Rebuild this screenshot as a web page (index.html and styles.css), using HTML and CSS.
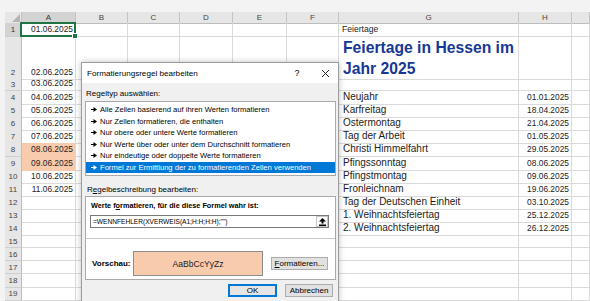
FILE: index.html
```html
<!DOCTYPE html>
<html lang="de">
<head>
<meta charset="utf-8">
<title>Formatierungsregel bearbeiten</title>
<link rel="stylesheet" href="styles.css">
</head>
<body>
<div class="top"></div>
<div class="sheet">
  <div class="r hd">
    <div class="corner"><svg width="8" height="8" viewBox="0 0 8 8"><polygon points="8,0 8,8 0,8" fill="#b5b5b5"/></svg></div>
    <div class="on">A</div><div>B</div><div>C</div><div>D</div><div>E</div><div>F</div><div>G</div><div>H</div><div></div>
  </div>
  <div class="r r1"><div class="rh on">1</div><div class="d sel">01.06.2025</div><div></div><div></div><div></div><div></div><div></div><div class="lbl">Feiertage</div><div></div><div></div></div>
  <div class="r r2"><div class="rh">2</div><div class="d">02.06.2025</div><div></div><div></div><div></div><div></div><div></div><div class="ttl">Feiertage in Hessen im<br>Jahr 2025</div><div></div><div></div></div>
  <div class="r"><div class="rh">3</div><div class="d">03.06.2025</div><div></div><div></div><div></div><div></div><div></div><div></div><div></div><div></div></div>
  <div class="r"><div class="rh">4</div><div class="d">04.06.2025</div><div></div><div></div><div></div><div></div><div></div><div class="n">Neujahr</div><div class="d">01.01.2025</div><div></div></div>
  <div class="r"><div class="rh">5</div><div class="d">05.06.2025</div><div></div><div></div><div></div><div></div><div></div><div class="n">Karfreitag</div><div class="d">18.04.2025</div><div></div></div>
  <div class="r"><div class="rh">6</div><div class="d">06.06.2025</div><div></div><div></div><div></div><div></div><div></div><div class="n">Ostermontag</div><div class="d">21.04.2025</div><div></div></div>
  <div class="r"><div class="rh">7</div><div class="d">07.06.2025</div><div></div><div></div><div></div><div></div><div></div><div class="n">Tag der Arbeit</div><div class="d">01.05.2025</div><div></div></div>
  <div class="r"><div class="rh">8</div><div class="d pk">08.06.2025</div><div></div><div></div><div></div><div></div><div></div><div class="n">Christi Himmelfahrt</div><div class="d">29.05.2025</div><div></div></div>
  <div class="r"><div class="rh">9</div><div class="d pk">09.06.2025</div><div></div><div></div><div></div><div></div><div></div><div class="n">Pfingssonntag</div><div class="d">08.06.2025</div><div></div></div>
  <div class="r"><div class="rh">10</div><div class="d">10.06.2025</div><div></div><div></div><div></div><div></div><div></div><div class="n">Pfingstmontag</div><div class="d">09.06.2025</div><div></div></div>
  <div class="r"><div class="rh">11</div><div class="d">11.06.2025</div><div></div><div></div><div></div><div></div><div></div><div class="n">Fronleichnam</div><div class="d">19.06.2025</div><div></div></div>
  <div class="r"><div class="rh">12</div><div></div><div></div><div></div><div></div><div></div><div></div><div class="n">Tag der Deutschen Einheit</div><div class="d">03.10.2025</div><div></div></div>
  <div class="r"><div class="rh">13</div><div></div><div></div><div></div><div></div><div></div><div></div><div class="n">1. Weihnachtsfeiertag</div><div class="d">25.12.2025</div><div></div></div>
  <div class="r"><div class="rh">14</div><div></div><div></div><div></div><div></div><div></div><div></div><div class="n">2. Weihnachtsfeiertag</div><div class="d">26.12.2025</div><div></div></div>
  <div class="r"><div class="rh">15</div><div></div><div></div><div></div><div></div><div></div><div></div><div></div><div></div><div></div></div>
  <div class="r"><div class="rh">16</div><div></div><div></div><div></div><div></div><div></div><div></div><div></div><div></div><div></div></div>
  <div class="r"><div class="rh">17</div><div></div><div></div><div></div><div></div><div></div><div></div><div></div><div></div><div></div></div>
  <div class="r"><div class="rh">18</div><div></div><div></div><div></div><div></div><div></div><div></div><div></div><div></div><div></div></div>
  <div class="r"><div class="rh">19</div><div></div><div></div><div></div><div></div><div></div><div></div><div></div><div></div><div></div></div>
</div>

<div class="dlg">
  <div class="tb">
    <span class="tt">Formatierungsregel bearbeiten</span>
    <span class="q">?</span>
    <svg class="x" width="9" height="9" viewBox="0 0 9 9"><path d="M1 1L8 8M8 1L1 8" stroke="#222" stroke-width="1"/></svg>
  </div>
  <div class="bd">
    <div class="lab">Regeltyp auswählen:</div>
    <ul class="list">
      <li><svg class="ar" width="6" height="5" viewBox="0 0 6 5"><path d="M0 2.5H3" stroke="currentColor" stroke-width="1"/><polygon points="2.5,0 6,2.5 2.5,5" fill="currentColor"/></svg>Alle Zellen basierend auf ihren Werten formatieren</li>
      <li><svg class="ar" width="6" height="5" viewBox="0 0 6 5"><path d="M0 2.5H3" stroke="currentColor" stroke-width="1"/><polygon points="2.5,0 6,2.5 2.5,5" fill="currentColor"/></svg>Nur Zellen formatieren, die enthalten</li>
      <li><svg class="ar" width="6" height="5" viewBox="0 0 6 5"><path d="M0 2.5H3" stroke="currentColor" stroke-width="1"/><polygon points="2.5,0 6,2.5 2.5,5" fill="currentColor"/></svg>Nur obere oder untere Werte formatieren</li>
      <li><svg class="ar" width="6" height="5" viewBox="0 0 6 5"><path d="M0 2.5H3" stroke="currentColor" stroke-width="1"/><polygon points="2.5,0 6,2.5 2.5,5" fill="currentColor"/></svg>Nur Werte über oder unter dem Durchschnitt formatieren</li>
      <li><svg class="ar" width="6" height="5" viewBox="0 0 6 5"><path d="M0 2.5H3" stroke="currentColor" stroke-width="1"/><polygon points="2.5,0 6,2.5 2.5,5" fill="currentColor"/></svg>Nur eindeutige oder doppelte Werte formatieren</li>
      <li class="act"><svg class="ar" width="6" height="5" viewBox="0 0 6 5"><path d="M0 2.5H3" stroke="currentColor" stroke-width="1"/><polygon points="2.5,0 6,2.5 2.5,5" fill="currentColor"/></svg>Formel zur Ermittlung der zu formatierenden Zellen verwenden</li>
    </ul>
    <div class="lab lab2">R<u>e</u>gelbeschreibung bearbeiten:</div>
    <div class="panel">
      <div class="up">
        <div class="bl pl">Werte f<u>o</u>rmatieren, für die diese Formel wahr ist:</div>
        <div class="fx">
          <span class="fxt">=WENNFEHLER(XVERWEIS(A1;H:H;H:H);"")</span>
          <span class="rb"><svg width="7" height="8" viewBox="0 0 7 8"><polygon points="3.5,0 7,3.5 0,3.5" fill="#000"/><rect x="2.5" y="3" width="2" height="2.5" fill="#000"/><rect x="0" y="6.5" width="7" height="1.5" fill="#000"/></svg></span>
        </div>
      </div>
      <div class="lo">
        <div class="bl">Vorschau:</div>
        <div class="pv">AaBbCcYyZz</div>
        <div class="btn fmt"><u>F</u>ormatieren...</div>
      </div>
    </div>
    <div class="btns">
      <div class="btn ok">OK</div>
      <div class="btn cancel">Abbrechen</div>
    </div>
  </div>
</div>
</body>
</html>
```

FILE: styles.css
```css
* { box-sizing: border-box; margin: 0; padding: 0; }
html, body { width: 590px; height: 301px; overflow: hidden; }
body {
  background: #fff;
  font-family: "Liberation Sans", Arial, sans-serif;
  position: relative;
  color: #222;
}
.top { height: 12px; background: #f3f3f3; }
.sheet { padding-left: 5px; background: #f3f3f3; }

.r {
  display: grid;
  grid-template-columns: 17px 54px 52px 52px 53px 54px 52px 180px 53px 1fr;
  height: 13.1px;
  background: #fff;
}
.r > div {
  border-right: 1px solid #dadada;
  border-bottom: 1px solid #dadada;
  display: flex;
  align-items: flex-end;
  font-size: 8.4px;
  line-height: 11px;
  padding: 0 2px 1px;
  white-space: nowrap;
  color: #222;
  min-width: 0;
}
.r1 { height: 14px; }
.r2 { height: 41px; }

.r.hd { height: 11px; }
.r.hd > div {
  background: #e6e6e6;
  border-right-color: #c4c4c4;
  border-bottom-color: #bdbdbd;
  justify-content: center;
  align-items: center;
  color: #444;
  font-size: 8px;
  padding: 0;
}
.r.hd > .corner { justify-content: flex-end; align-items: flex-end; padding: 0 1px 1px 0; }
.r.hd > .on { background: #d3d3d3; color: #333; }

.r > .rh {
  background: #e6e6e6;
  border-right-color: #bdbdbd;
  border-bottom-color: #cfcfcf;
  justify-content: center;
  align-items: center;
  color: #444;
  font-size: 8px;
  padding: 0;
}
.r > .rh.on { background: #d3d3d3; color: #333; }
.r2 > .rh { align-items: flex-end; padding-bottom: 1px; }

.r > .d { justify-content: flex-end; }
.r > .pk { background: #f8cbad; border-bottom-color: #f8cbad; }
.r > .sel { position: relative; }
.sel::after {
  content: "";
  position: absolute;
  left: -2px; top: -1px; right: -1px; bottom: -1px;
  border: 2px solid #217346;
}
.sel::before {
  content: "";
  position: absolute;
  right: -3px; bottom: -3px;
  width: 4px; height: 4px;
  background: #217346;
  border: 1px solid #fff;
  z-index: 2;
}
.r > .lbl { font-size: 8.6px; padding-left: 3px; }
.r > .n { font-size: 10px; padding-left: 4px; color: #1c1c1c; line-height: 12px; }
.r > .ttl {
  align-items: flex-start;
  font-size: 15.7px;
  font-weight: bold;
  line-height: 21px;
  color: #163894;
  padding: 0 0 0 4px;
  overflow: visible;
}

/* dialog */
.dlg {
  position: absolute;
  left: 81px;
  top: 62px;
  width: 258px;
  height: 250px;
  border: 1px solid #9c9c9c;
  background: #f0f0f0;
  box-shadow: 0 0 6px rgba(0,0,0,0.25);
  font-size: 8px;
  color: #000;
}
.tb {
  height: 20px;
  background: #fff;
  display: flex;
  align-items: center;
  padding-left: 5px;
  padding-right: 8px;
}
.tt { flex: 1; font-size: 8.1px; }
.q { width: 10px; text-align: center; font-size: 9px; margin-right: 19px; }
.x { display: block; }

.bd { padding: 0 2px 0 3px; }
.lab { line-height: 10px; margin-top: 6px; padding-left: 1px; }
.lab2 { margin-top: 9px; padding-left: 2px; }
.list {
  list-style: none;
  margin-top: 2px;
  background: #fff;
  border: 1px solid #a9a9a9;
  padding: 2px 0;
}
.list li {
  height: 11.5px;
  display: flex;
  align-items: center;
  padding-left: 5px;
  white-space: nowrap;
  overflow: hidden;
  color: #000;
  font-size: 7.6px;
}
.list li.act { background: #0078d7; color: #fff; }
.ar { margin-right: 3px; flex: none; }

.panel {
  margin-top: 1px;
  background: #fff;
  border: 1px solid #a9a9a9;
}
.up {
  padding: 4px 6px 10px 4px;
  border-bottom: 1px solid #c8c8c8;
}
.bl { font-weight: bold; line-height: 10px; white-space: nowrap; }
.pl { padding-left: 1px; font-size: 7.3px; }
.fx {
  margin-top: 4px;
  height: 13px;
  border: 1px solid #7a7a7a;
  display: flex;
  align-items: center;
  justify-content: space-between;
}
.fxt { padding-left: 2px; white-space: nowrap; font-size: 6.6px; }
.rb {
  width: 12px;
  height: 11px;
  border: 1px solid #c6c6c6;
  background: #fbfbfb;
  display: flex;
  align-items: center;
  justify-content: center;
}
.lo {
  display: grid;
  grid-template-columns: 41px 130px 1fr;
  align-items: center;
  padding: 12px 7px 3px 6px;
}
.pv {
  height: 25px;
  background: #f8cbad;
  border: 1px solid #8d8d8d;
  display: flex;
  align-items: center;
  justify-content: center;
  font-size: 8.6px;
  color: #222;
}
.btn {
  height: 13px;
  border: 1px solid #adadad;
  background: #e1e1e1;
  display: flex;
  align-items: center;
  justify-content: center;
  white-space: nowrap;
}
.fmt { margin-left: 8px; }
.btns {
  display: flex;
  justify-content: flex-end;
  gap: 8px;
  margin-top: 4px;
  padding-right: 3px;
}
.ok { width: 49px; border-color: #0078d7; box-shadow: inset 0 0 0 1px #0078d7; background: #e5e5e5; }
.cancel { width: 48px; }
```
